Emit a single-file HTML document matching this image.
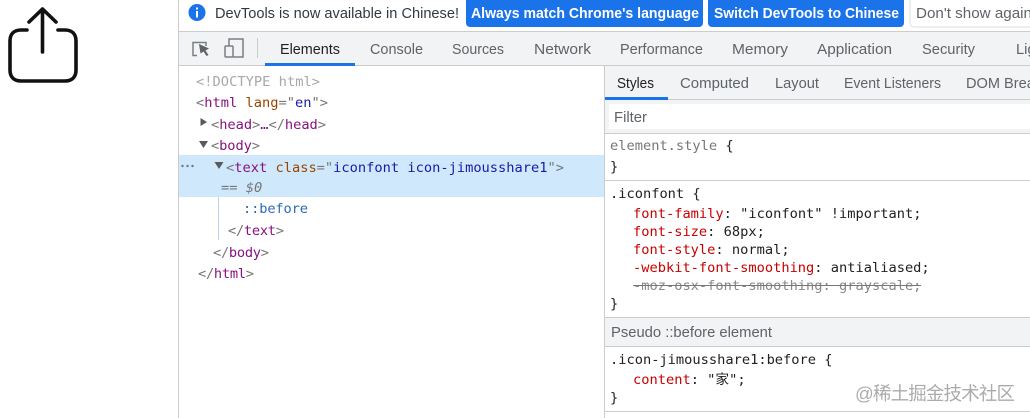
<!DOCTYPE html>
<html><head><meta charset="utf-8"><style>
html,body{margin:0;padding:0;background:#fff;width:1030px;height:418px;overflow:hidden}
svg{display:block}
.s{font-family:"Liberation Sans",sans-serif;font-size:15px;fill:#5f6368}
.b{font-family:"Liberation Sans",sans-serif;font-size:15px;font-weight:bold;fill:#fff}
.m{font-family:"DejaVu Sans Mono",monospace;font-size:13.7px}
.g{fill:#a8a8a8}.t{fill:#881280}.n{fill:#994500}.v{fill:#1a1aa6}.d{fill:#202124}.r{fill:#c80000}.x{fill:#777}
</style></head><body>
<svg width="1030" height="418" viewBox="0 0 1030 418" xmlns="http://www.w3.org/2000/svg">
<rect width="1030" height="418" fill="#fff"/>
<g fill="none" stroke="#111" stroke-width="3.6" stroke-linecap="round" stroke-linejoin="round">
<path d="M27 30H21C14 30 10 34 10 41V70C10 77 14 81 21 81H65C72 81 76 77 76 70V41C76 34 72 30 65 30H58"/>
<path d="M42.500 52V9M29 22L42.500 9L56 22"/>
</g>
<rect x="178" y="0" width="1" height="418" fill="#ccc"/>
<rect x="179" y="32" width="851" height="33" fill="#f1f3f4"/>
<rect x="179" y="31" width="851" height="1" fill="#ccc"/>
<rect x="179" y="65" width="851" height="1" fill="#ccc"/>
<circle cx="197" cy="12.500" r="8.500" fill="#1a73e8"/>
<rect x="196" y="11" width="2" height="6.500" fill="#fff"/><rect x="196" y="7.500" width="2" height="2" fill="#fff"/>
<text class="s" x="215" y="18" textLength="244" lengthAdjust="spacingAndGlyphs" style="fill:#303942">DevTools is now available in Chinese!</text>
<path d="M466 0H703V23a4 4 0 0 1-4 4H470a4 4 0 0 1-4-4Z" fill="#1a73e8"/>
<text class="b" x="471" y="18" textLength="228" lengthAdjust="spacingAndGlyphs">Always match Chrome's language</text>
<path d="M708 0H904V23a4 4 0 0 1-4 4H712a4 4 0 0 1-4-4Z" fill="#1a73e8"/>
<text class="b" x="714" y="18" textLength="185" lengthAdjust="spacingAndGlyphs">Switch DevTools to Chinese</text>
<path d="M910 0V23a4 4 0 0 0 4 4H1031V0" fill="#fff" stroke="#dadce0"/>
<text class="s" x="916" y="18" textLength="116" lengthAdjust="spacingAndGlyphs">Don't show again</text>
<g fill="none" stroke="#7a7f83" stroke-width="1.500">
<path d="M197 55.500H193V42.500H206V46"/>
<rect x="225" y="46" width="8" height="11" rx="1"/>
<path d="M229 46V39H243V57H233"/>
</g>
<path d="M199 44L209 48.500L205.500 50.500L208.500 55L206.500 56L203.500 51.500L200.500 53.500Z" fill="#5f6368"/>
<rect x="257" y="38" width="1" height="20" fill="#ccc"/>
<rect x="265" y="63" width="90" height="3" fill="#1a73e8"/>
<text class="s" x="280" y="54" textLength="60" lengthAdjust="spacingAndGlyphs" style="fill:#202124">Elements</text>
<text class="s" x="370" y="54" textLength="53" lengthAdjust="spacingAndGlyphs">Console</text>
<text class="s" x="452" y="54" textLength="52" lengthAdjust="spacingAndGlyphs">Sources</text>
<text class="s" x="534" y="54" textLength="57" lengthAdjust="spacingAndGlyphs">Network</text>
<text class="s" x="620" y="54" textLength="83" lengthAdjust="spacingAndGlyphs">Performance</text>
<text class="s" x="732" y="54" textLength="56" lengthAdjust="spacingAndGlyphs">Memory</text>
<text class="s" x="817" y="54" textLength="75" lengthAdjust="spacingAndGlyphs">Application</text>
<text class="s" x="922" y="54" textLength="53" lengthAdjust="spacingAndGlyphs">Security</text>
<text class="s" x="1016" y="54" textLength="72" lengthAdjust="spacingAndGlyphs">Lighthouse</text>

<rect x="179" y="155" width="425" height="42" fill="#cfe8fc"/>
<g class="m">
<text x="196" y="86" class="g" textLength="124">&lt;!DOCTYPE html&gt;</text>
<text x="196" y="107" textLength="132"><tspan class="x">&lt;</tspan><tspan class="t">html</tspan><tspan> </tspan><tspan class="n">lang</tspan><tspan class="x">="</tspan><tspan class="v">en</tspan><tspan class="x">"&gt;</tspan></text>
<text x="211" y="129" textLength="115"><tspan class="x">&lt;</tspan><tspan class="t">head</tspan><tspan class="x">&gt;</tspan><tspan class="t">…</tspan><tspan class="x">&lt;/</tspan><tspan class="t">head</tspan><tspan class="x">&gt;</tspan></text>
<text x="211" y="150" textLength="49"><tspan class="x">&lt;</tspan><tspan class="t">body</tspan><tspan class="x">&gt;</tspan></text>
<text x="226" y="172" textLength="338"><tspan class="x">&lt;</tspan><tspan class="t">text</tspan><tspan> </tspan><tspan class="n">class</tspan><tspan class="x">="</tspan><tspan class="v">iconfont icon-jimousshare1</tspan><tspan class="x">"&gt;</tspan></text>
<text x="221" y="192" class="x">== <tspan font-style="italic">$0</tspan></text>
<text x="243" y="213" style="fill:#2a6bb5" textLength="65">::before</text>
<text x="228" y="235" textLength="56"><tspan class="x">&lt;/</tspan><tspan class="t">text</tspan><tspan class="x">&gt;</tspan></text>
<text x="213" y="257" textLength="56"><tspan class="x">&lt;/</tspan><tspan class="t">body</tspan><tspan class="x">&gt;</tspan></text>
<text x="198" y="278" textLength="56"><tspan class="x">&lt;/</tspan><tspan class="t">html</tspan><tspan class="x">&gt;</tspan></text>
</g>
<path d="M200.500 118L207 122L200.500 126Z M199 141H208L203.500 148Z M214.500 162H223.500L219 169Z" fill="#5a5a5a"/>
<g fill="#5f7a99"><circle cx="182.500" cy="166" r="1.200"/><circle cx="187.500" cy="166" r="1.200"/><circle cx="192.500" cy="166" r="1.200"/></g>
<rect x="218" y="197" width="1" height="43" fill="#bcd2ea"/>

<rect x="604" y="66" width="1" height="352" fill="#ccc"/>
<rect x="605" y="66" width="425" height="33" fill="#f1f3f4"/>
<rect x="605" y="99" width="425" height="1" fill="#ccc"/>
<rect x="605" y="97" width="63" height="3" fill="#1a73e8"/>
<text class="s" x="617" y="88" textLength="37" lengthAdjust="spacingAndGlyphs" style="fill:#202124">Styles</text>
<text class="s" x="680" y="88" textLength="69" lengthAdjust="spacingAndGlyphs">Computed</text>
<text class="s" x="775" y="88" textLength="44" lengthAdjust="spacingAndGlyphs">Layout</text>
<text class="s" x="844" y="88" textLength="97" lengthAdjust="spacingAndGlyphs">Event Listeners</text>
<text class="s" x="966" y="88" textLength="115" lengthAdjust="spacingAndGlyphs">DOM Breakpoints</text>
<rect x="605" y="100" width="425" height="33" fill="#f1f3f4"/>
<rect x="609" y="104" width="421" height="25" fill="#fff"/>
<text class="s" x="614" y="122" textLength="33" lengthAdjust="spacingAndGlyphs">Filter</text>
<rect x="605" y="133" width="425" height="1" fill="#ccc"/>
<g class="m">
<text x="610" y="150"><tspan class="x">element.style</tspan> <tspan class="d">{</tspan></text>
<text x="610" y="171" class="d">}</text>
<text x="610" y="198" class="d">.iconfont {</text>
<text x="633" y="218"><tspan class="r">font-family</tspan><tspan class="d">: "iconfont" !important;</tspan></text>
<text x="633" y="236"><tspan class="r">font-size</tspan><tspan class="d">: 68px;</tspan></text>
<text x="633" y="254"><tspan class="r">font-style</tspan><tspan class="d">: normal;</tspan></text>
<text x="633" y="272"><tspan class="r">-webkit-font-smoothing</tspan><tspan class="d">: antialiased;</tspan></text>
<text x="633" y="290" style="fill:#888">-moz-osx-font-smoothing: grayscale;</text>
<text x="610" y="308" class="d">}</text>
<text x="610" y="364" class="d">.icon-jimousshare1:before {</text>
<text x="633" y="384"><tspan class="r">content</tspan><tspan class="d">: "</tspan><tspan class="d" font-family="Noto Sans CJK SC,sans-serif">家</tspan><tspan class="d">";</tspan></text>
<text x="610" y="402" class="d">}</text>
</g>
<rect x="633" y="285" width="288" height="1" fill="#777"/>
<rect x="605" y="180" width="425" height="1" fill="#ccc"/>
<rect x="605" y="317" width="425" height="1" fill="#ccc"/>
<rect x="605" y="318" width="425" height="28" fill="#f1f3f4"/>
<rect x="605" y="346" width="425" height="1" fill="#ccc"/>
<rect x="605" y="411" width="425" height="1" fill="#ccc"/>
<text class="s" x="611" y="337" textLength="161" lengthAdjust="spacingAndGlyphs">Pseudo ::before element</text>
<text x="855" y="400" font-family="Liberation Sans,Noto Sans CJK SC,sans-serif" font-size="18.500" fill="#8f8f8f" fill-opacity=".75" textLength="160">@稀土掘金技术社区</text>
</svg>
</body></html>
